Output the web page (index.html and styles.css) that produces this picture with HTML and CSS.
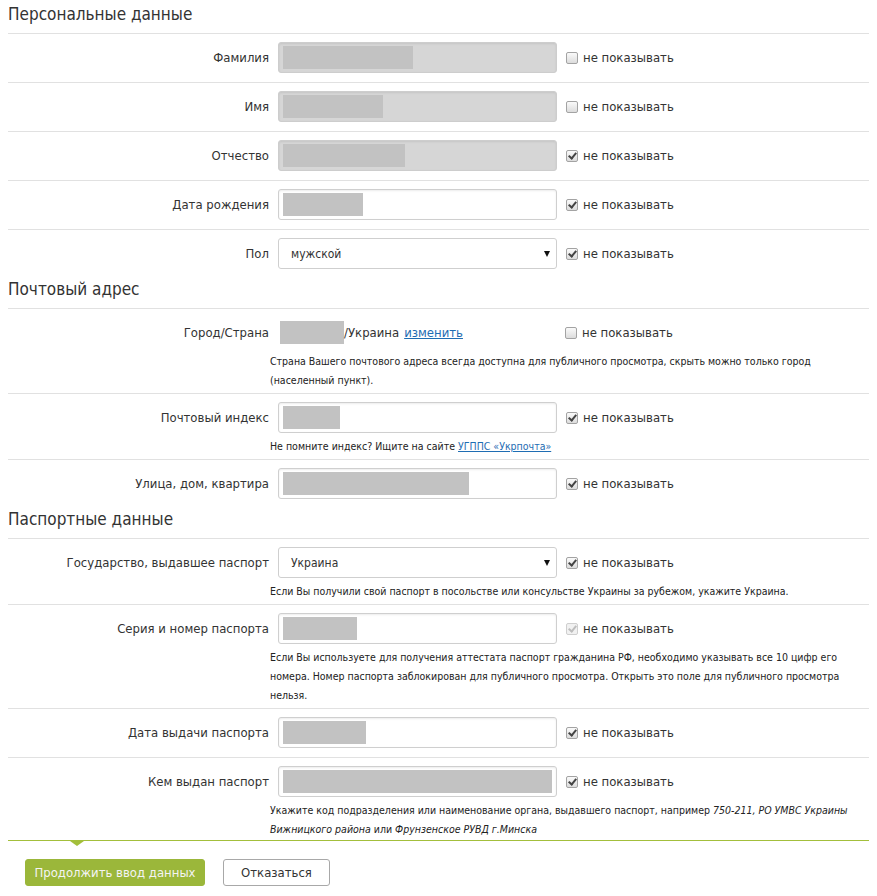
FILE: index.html
```html
<!DOCTYPE html>
<html lang="ru">
<head>
  <meta charset="UTF-8" />
  <meta name="viewport" content="width=device-width, initial-scale=1.0"/>
  <title>Анкета</title>
  <link rel="stylesheet" href="styles.css">
</head>
<body>

  <!-- ЛИЧНЫЕ ДАННЫЕ -->
  <section class="section">
    <h2 class="section-title">Персональные данные</h2>

    <div class="row">
      <div class="row-main">
        <span class="row-label">Фамилия</span>
        <div class="field field-disabled"><span class="mask" style="width:130px"></span></div>
        <label class="hide-opt"><span class="check"></span>не показывать</label>
      </div>
    </div>

    <div class="row">
      <div class="row-main">
        <span class="row-label">Имя</span>
        <div class="field field-disabled"><span class="mask" style="width:100px"></span></div>
        <label class="hide-opt"><span class="check"></span>не показывать</label>
      </div>
    </div>

    <div class="row">
      <div class="row-main">
        <span class="row-label">Отчество</span>
        <div class="field field-disabled"><span class="mask" style="width:122px"></span></div>
        <label class="hide-opt"><span class="check checked"></span>не показывать</label>
      </div>
    </div>

    <div class="row">
      <div class="row-main">
        <span class="row-label">Дата рождения</span>
        <div class="field"><span class="mask" style="width:80px"></span></div>
        <label class="hide-opt"><span class="check checked"></span>не показывать</label>
      </div>
    </div>

    <div class="row">
      <div class="row-main">
        <span class="row-label">Пол</span>
        <div class="field field-select">мужской<span class="arrow"></span></div>
        <label class="hide-opt"><span class="check checked"></span>не показывать</label>
      </div>
    </div>
  </section>

  <!-- ПОЧТОВЫЙ АДРЕС -->
  <section class="section">
    <h2 class="section-title">Почтовый адрес</h2>

    <div class="row has-hint">
      <div class="row-main">
        <span class="row-label">Город/Страна</span>
        <div class="field-text"><span class="mask mask-city"></span>/Украина <a href="#" class="link">изменить</a></div>
        <label class="hide-opt"><span class="check"></span>не показывать</label>
      </div>
      <p class="hint">Страна Вашего почтового адреса всегда доступна для публичного просмотра, скрыть можно только город (населенный пункт).</p>
    </div>

    <div class="row has-hint">
      <div class="row-main">
        <span class="row-label">Почтовый индекс</span>
        <div class="field"><span class="mask" style="width:57px"></span></div>
        <label class="hide-opt"><span class="check checked"></span>не показывать</label>
      </div>
      <p class="hint">Не помните индекс? Ищите на сайте <a href="#" class="link">УГППС «Укрпочта»</a></p>
    </div>

    <div class="row">
      <div class="row-main">
        <span class="row-label">Улица, дом, квартира</span>
        <div class="field"><span class="mask" style="width:186px"></span></div>
        <label class="hide-opt"><span class="check checked"></span>не показывать</label>
      </div>
    </div>
  </section>

  <!-- ПАСПОРТ -->
  <section class="section">
    <h2 class="section-title">Паспортные данные</h2>

    <div class="row has-hint">
      <div class="row-main">
        <span class="row-label">Государство, выдавшее паспорт</span>
        <div class="field field-select">Украина<span class="arrow"></span></div>
        <label class="hide-opt"><span class="check checked"></span>не показывать</label>
      </div>
      <p class="hint">Если Вы получили свой паспорт в посольстве или консульстве Украины за рубежом, укажите Украина.</p>
    </div>

    <div class="row has-hint">
      <div class="row-main">
        <span class="row-label">Серия и номер паспорта</span>
        <div class="field"><span class="mask" style="width:74px"></span></div>
        <label class="hide-opt"><span class="check checked locked"></span>не показывать</label>
      </div>
      <p class="hint">Если Вы используете для получения аттестата паспорт гражданина РФ, необходимо указывать все 10 цифр его номера. Номер паспорта заблокирован для публичного просмотра. Открыть это поле для публичного просмотра нельзя.</p>
    </div>

    <div class="row">
      <div class="row-main">
        <span class="row-label">Дата выдачи паспорта</span>
        <div class="field"><span class="mask" style="width:83px"></span></div>
        <label class="hide-opt"><span class="check checked"></span>не показывать</label>
      </div>
    </div>

    <div class="row has-hint">
      <div class="row-main">
        <span class="row-label">Кем выдан паспорт</span>
        <div class="field"><span class="mask" style="width:271px"></span></div>
        <label class="hide-opt"><span class="check checked"></span>не показывать</label>
      </div>
      <p class="hint">Укажите код подразделения или наименование органа, выдавшего паспорт, например <i>750-211, РО УМВС Украины Вижницкого района</i> или <i>Фрунзенское РУВД г.Минска</i></p>
    </div>
  </section>

  <div class="form-footer">
    <button class="btn btn-primary">Продолжить ввод данных</button>
    <button class="btn btn-cancel">Отказаться</button>
  </div>

</body>
</html>
```

FILE: styles.css
```css
body {
  margin: 0;
  padding: 0 8px;
  font-family: "DejaVu Sans Condensed", "DejaVu Sans", sans-serif;
  font-size: 13px;
  color: #333;
  background: #fff;
}

.section-title {
  margin: 0;
  font-size: 17px;
  font-weight: normal;
  line-height: 28px;
  padding-bottom: 5px;
  border-bottom: 1px solid #e1e1e1;
  color: #333;
}

.row {
  padding: 8px 0 9px;
  border-bottom: 1px solid #e1e1e1;
}

.row.has-hint {
  padding-bottom: 3px;
}

.section .row:last-child {
  border-bottom: none;
  padding-bottom: 6px;
}

.section .row.has-hint:last-child {
  padding-bottom: 1px;
}

.row-main {
  display: flex;
  align-items: center;
  height: 31px;
}

.row-label {
  width: 261px;
  padding-right: 9px;
  text-align: right;
  flex-shrink: 0;
}

.field {
  box-sizing: border-box;
  width: 279px;
  height: 31px;
  border: 1px solid #cfcfcf;
  border-radius: 3px;
  box-shadow: inset 0 1px 2px rgba(0, 0, 0, 0.08);
  background: #fff;
  padding: 3px 4px;
  display: flex;
  align-items: stretch;
}

.field-disabled {
  background: #d6d6d6;
  border-color: #cdcdcd;
}

.mask {
  display: inline-block;
  background: #c2c2c2;
}

.field-select {
  align-items: center;
  padding: 0 6px 0 12px;
  font-size: 12px;
  justify-content: space-between;
  box-shadow: none;
}

.arrow {
  width: 0;
  height: 0;
  border-left: 3px solid transparent;
  border-right: 3px solid transparent;
  border-top: 6px solid #111;
}

.field-text {
  width: 278px;
  display: flex;
  align-items: center;
  padding-left: 2px;
  box-sizing: border-box;
}

.mask-city {
  width: 64px;
  height: 23px;
}

.link {
  color: #1f6db3;
  text-decoration: underline;
  margin-left: 5px;
}

.hide-opt {
  display: flex;
  align-items: center;
  padding-left: 9px;
}

.check {
  box-sizing: border-box;
  width: 12px;
  height: 12px;
  border: 1px solid #a3a3a3;
  border-radius: 2px;
  background: linear-gradient(#fafafa, #dcdcdc);
  margin-right: 5px;
  position: relative;
}

.check.checked::after {
  content: "";
  position: absolute;
  left: 3px;
  top: 0;
  width: 3px;
  height: 6px;
  border-right: 2px solid #444;
  border-bottom: 2px solid #444;
  transform: rotate(40deg);
}

.check.locked {
  border-color: #cfcfcf;
  background: #f1f1f1;
}

.check.locked::after {
  border-color: #bdbdbd;
}

.hint {
  margin: 4px 0 0 262px;
  width: 595px;
  font-size: 10.5px;
  line-height: 19px;
  color: #222;
}

.hint .link {
  margin-left: 0;
}

.form-footer {
  border-top: 1px solid #a3bf3b;
  padding: 18px 0 10px 17px;
  display: flex;
  gap: 18px;
  position: relative;
}

.form-footer::before {
  content: "";
  position: absolute;
  top: 0;
  left: 62px;
  border-left: 7px solid transparent;
  border-right: 7px solid transparent;
  border-top: 5px solid #a3bf3b;
}

.btn {
  height: 27px;
  font-family: inherit;
  font-size: 13px;
  border-radius: 3px;
  cursor: pointer;
}

.btn-primary {
  width: 180px;
  background: #9bb73a;
  border: 1px solid #9bb73a;
  color: #f4f4f4;
}

.btn-cancel {
  width: 107px;
  background: #fff;
  border: 1px solid #a8a8a8;
  color: #333;
}
```
